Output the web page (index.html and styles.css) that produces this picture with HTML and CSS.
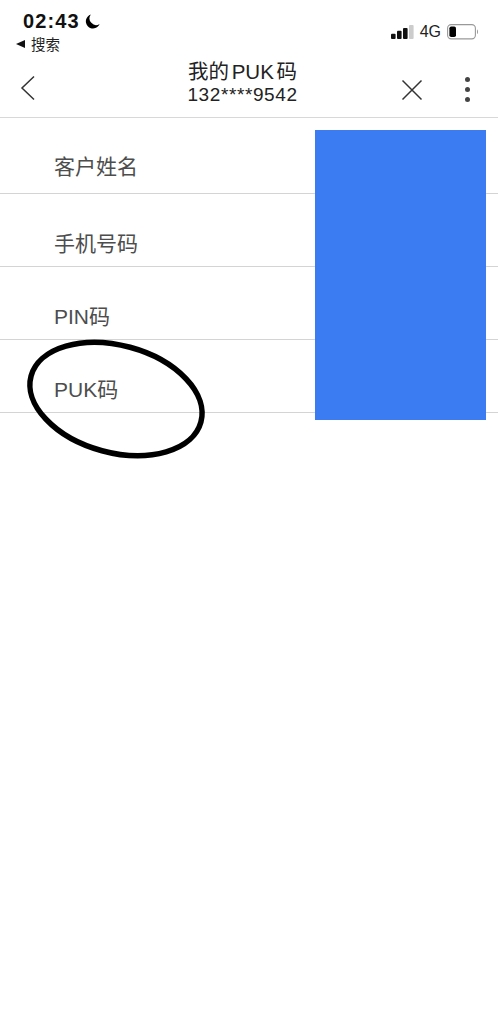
FILE: index.html
```html
<!DOCTYPE html>
<html lang="zh">
<head>
<meta charset="utf-8">
<title>我的PUK码</title>
<link rel="stylesheet" href="styles.css">
</head>
<body>
<div class="page">
  <div class="status">
    <div class="status-left">
      <div class="time-row">
        <span class="time">02:43</span>
        <svg class="moon" viewBox="0 0 16 16"><path d="M6.2 .6A7.6 7.6 0 1 0 15.6 10.6 7 7 0 0 1 6.2 .6Z" fill="#000"/></svg>
      </div>
      <div class="back-app"><span class="tri"></span><span>搜索</span></div>
    </div>
    <div class="status-right">
      <svg class="signal" viewBox="0 0 23 14"><rect x="0" y="8.800" width="4.600" height="5.200" rx="1" fill="#111"/><rect x="6" y="5.800" width="4.600" height="8.200" rx="1" fill="#111"/><rect x="12" y="3" width="4.600" height="11" rx="1" fill="#111"/><rect x="18" y="0" width="4.600" height="14" rx="1" fill="#ccc"/></svg>
      <span class="net">4G</span>
      <svg class="battery" viewBox="0 0 32 16"><rect x=".6" y=".6" width="27.800" height="14.300" rx="3.600" fill="none" stroke="#999" stroke-width="1.100"/><rect x="2.400" y="2.400" width="6.600" height="10.700" rx="1.800" fill="#000"/><path d="M30 5.500c1.300.4 1.300 4.100 0 4.500Z" fill="#999"/></svg>
    </div>
  </div>
  <header class="nav">
    <svg class="nav-back" viewBox="0 0 16 26"><path d="M14 1.500 2 13l12 11.500" fill="none" stroke="#333" stroke-width="1.500"/></svg>
    <div class="title">
      <div class="title-main">我的 PUK 码</div>
      <div class="title-sub">132****9542</div>
    </div>
    <svg class="nav-close" viewBox="0 0 22 22"><path d="M1.500 1.500l19 19M20.500 1.500l-19 19" fill="none" stroke="#333" stroke-width="1.500"/></svg>
    <div class="nav-more"><i></i><i></i><i></i></div>
  </header>
  <main class="list">
    <div class="row row-first">客户姓名</div>
    <div class="row">手机号码</div>
    <div class="row">PIN码</div>
    <div class="row">PUK码</div>
  </main>
  <div class="mask"></div>
  <svg class="circle" viewBox="0 0 498 1020"><ellipse cx="116" cy="399" rx="88" ry="53.600" transform="rotate(15.200 116 399)" fill="none" stroke="#000" stroke-width="5.500"/></svg>
</div>
</body>
</html>
```
FILE: styles.css
```css
* { box-sizing: border-box; }
html, body { margin: 0; background: #fff; }
body { font-family: "Liberation Sans", "Noto Sans CJK SC", sans-serif; }
.page { position: relative; width: 498px; height: 1020px; overflow: hidden; }
.status { display: flex; justify-content: space-between; height: 57px; padding: 11px 19px 0 16px; }
.time-row { display: flex; align-items: center; gap: 5px; padding-left: 7px; height: 21px; }
.time { font-size: 20px; font-weight: 700; letter-spacing: 1.100px; color: #111; }
.moon { width: 15px; height: 15px; }
.back-app { display: flex; align-items: center; gap: 6px; font-size: 14.500px; color: #222; margin-top: 3px; height: 17px; }
.tri { width: 0; height: 0; border-style: solid; border-width: 4.500px 9px 4.500px 0; border-color: transparent #111 transparent transparent; }
.status-right { display: flex; align-items: center; height: 40px; gap: 6px; padding-top: 2px; }
.signal { width: 23px; height: 14px; }
.net { font-size: 16px; color: #222; }
.battery { width: 32px; height: 16px; }
.nav { display: flex; align-items: center; height: 61px; border-bottom: 1px solid #d8d8d8; padding: 0 28px 0 20px; }
.nav-back { width: 16px; height: 26px; margin-top: 2px; }
.title { flex: 1; text-align: center; color: #222; padding-left: 48px; margin-bottom: 9px; }
.title-main { font-size: 20.500px; line-height: 24px; word-spacing: -3px; }
.title-sub { font-size: 19px; line-height: 21px; letter-spacing: .6px; }
.nav-close { width: 22px; height: 22px; margin-top: 6px; margin-right: 42px; }
.nav-more { display: flex; flex-direction: column; gap: 5px; margin-top: 5px; }
.nav-more i { display: block; width: 5px; height: 5px; border-radius: 50%; background: #444; }
.list { color: #4d4d4d; font-size: 21px; }
.row { height: 73px; padding: 23px 0 0 54px; display: flex; align-items: center; border-bottom: 1px solid #d4d4d4; }
.row-first { height: 76px; padding-top: 18px; }
.mask { position: absolute; left: 315px; top: 130px; width: 171px; height: 290px; background: #3b7cf3; }
.circle { position: absolute; left: 0; top: 0; width: 498px; height: 1020px; }
```
